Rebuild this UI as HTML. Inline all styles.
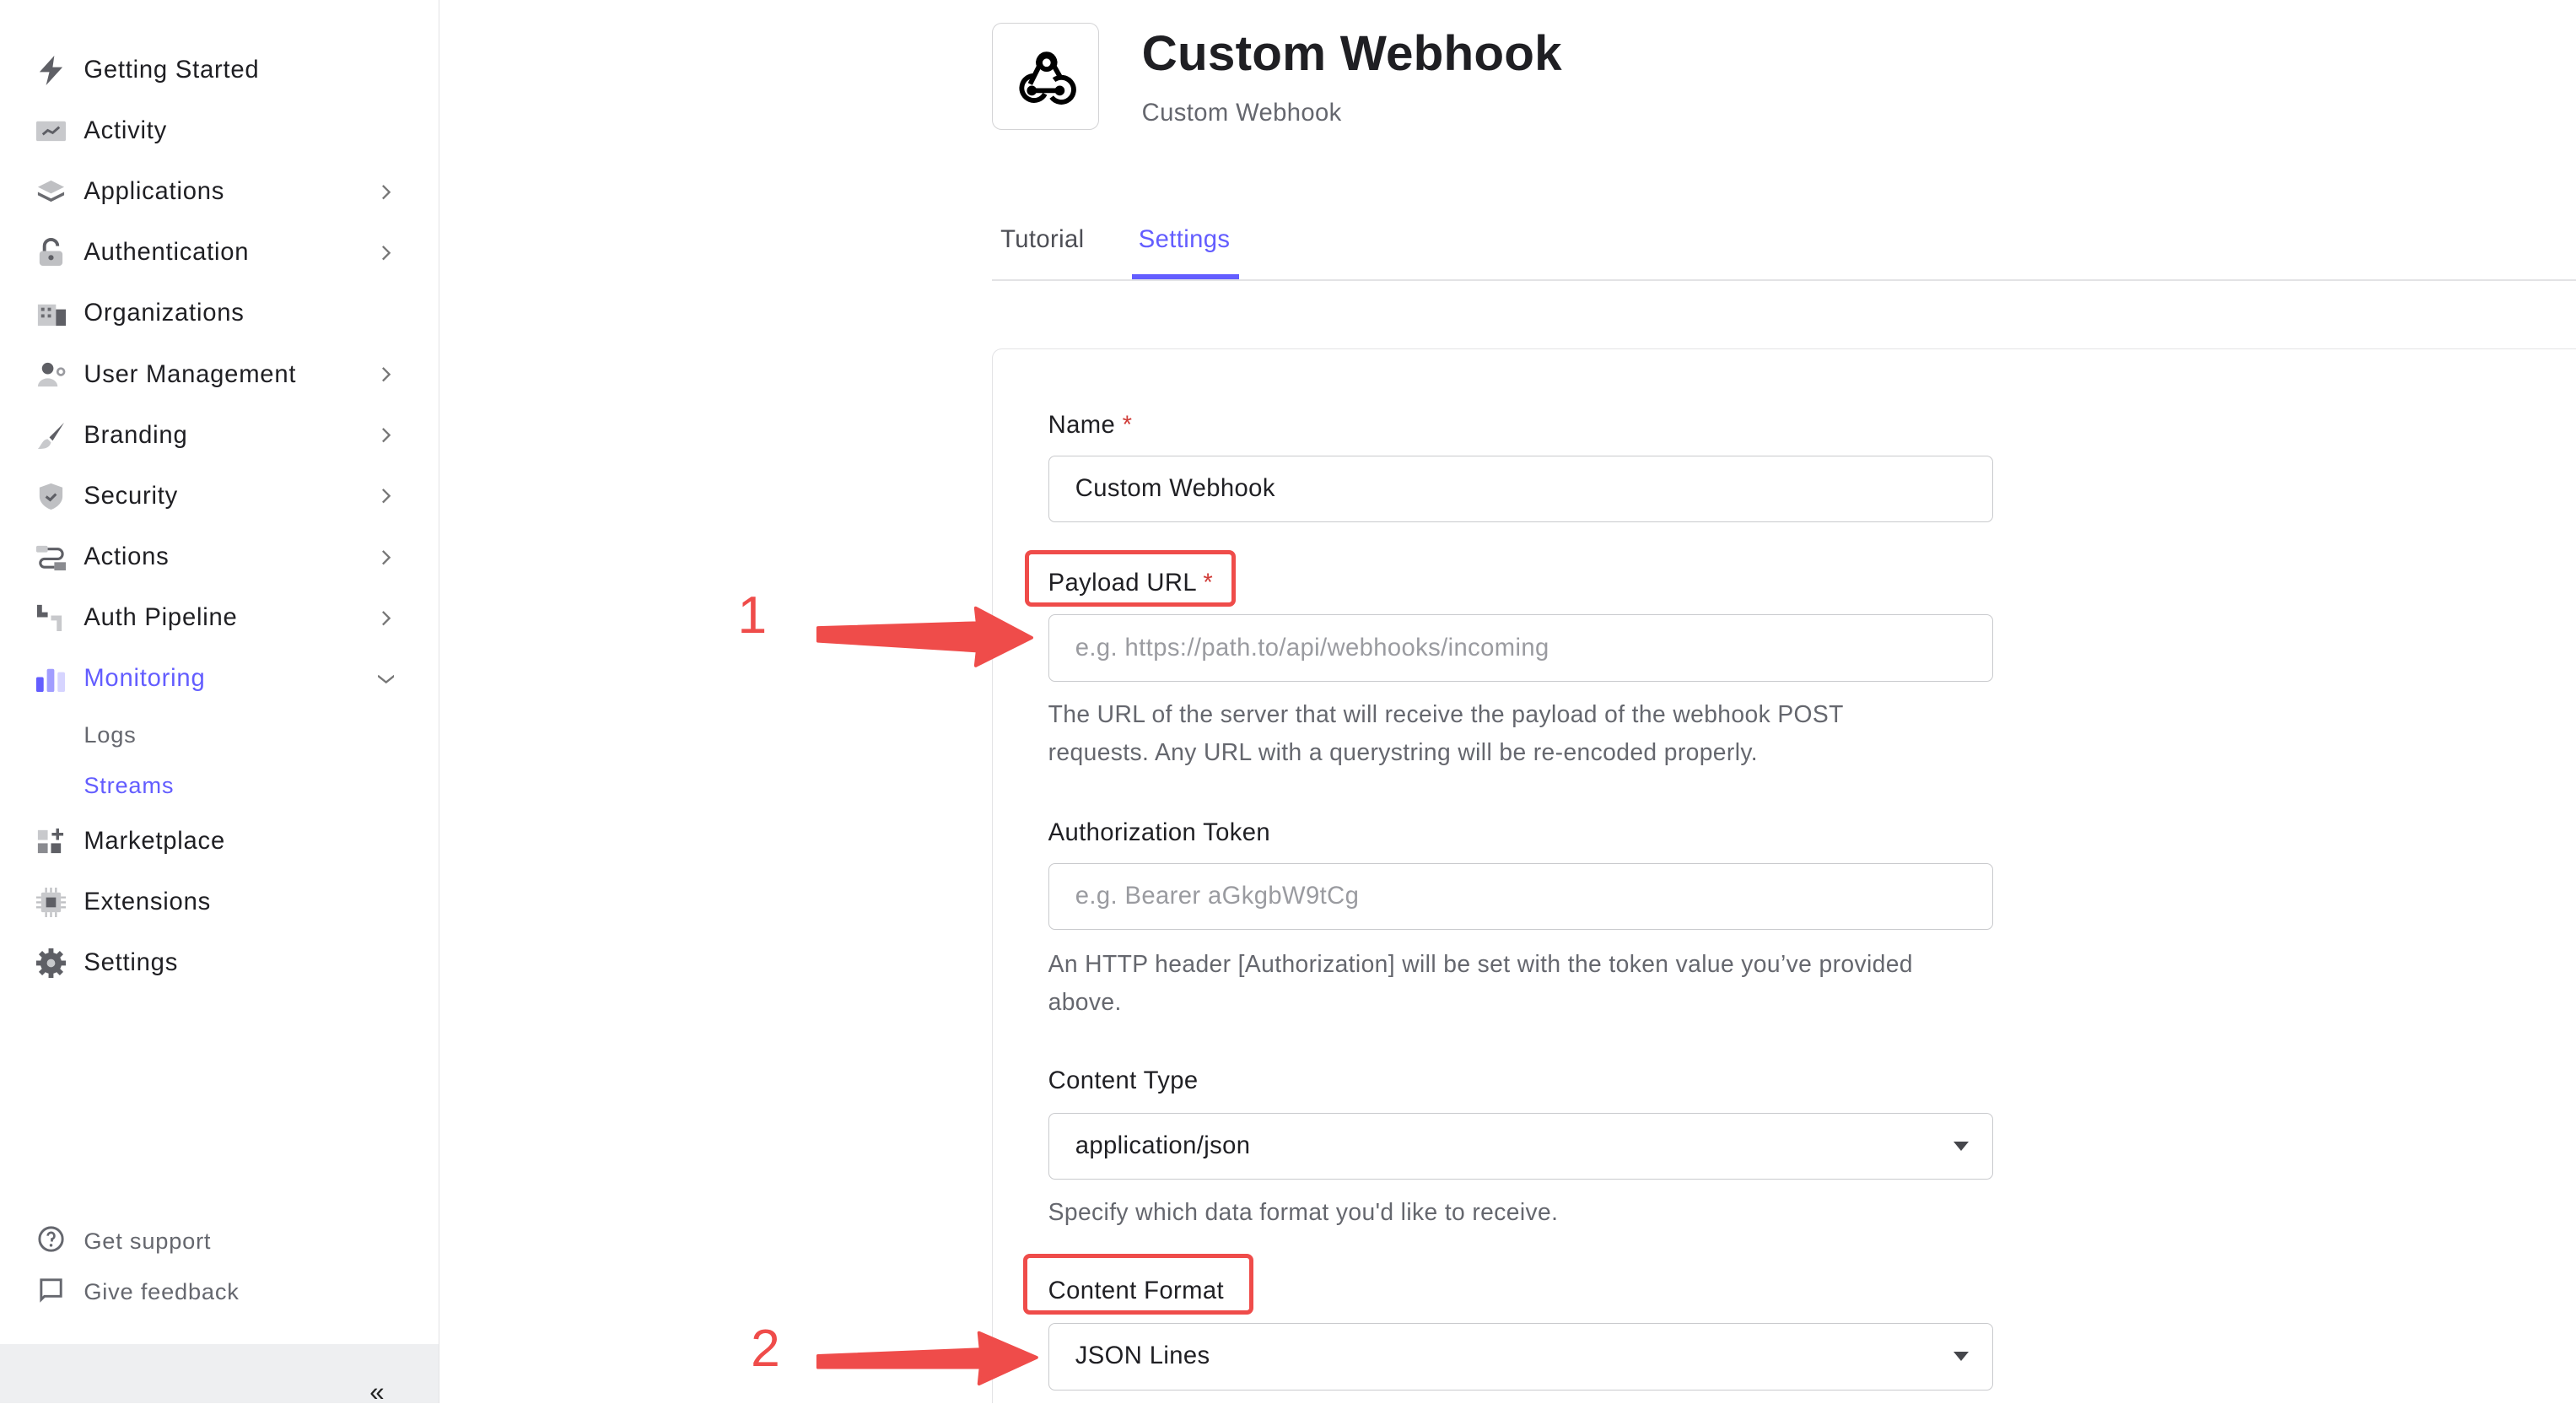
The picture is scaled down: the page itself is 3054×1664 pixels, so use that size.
<!DOCTYPE html>
<html><head><meta charset="utf-8"><style>
html,body{margin:0;padding:0;background:#fff;overflow:hidden}
body{width:3054px;height:1664px}
#r{zoom:1.9477;width:1568px;height:854px;position:relative;font-family:"Liberation Sans",sans-serif;color:#1f1f23;overflow:hidden}
.a{position:absolute;white-space:nowrap}
#sb{position:absolute;left:0;top:0;width:267px;height:854px;border-right:1px solid #e3e3e5;background:#fff}
.nv{position:absolute;left:51px;font-size:15px;color:#1f1f23;line-height:18px;letter-spacing:.4px}
.ic{position:absolute;left:21px;width:20px;height:20px}
.ch{position:absolute;left:230px;width:10px;height:10px}
.lbl{position:absolute;left:638px;font-size:15px;line-height:18px;color:#1f1f23;letter-spacing:.2px}
.lbl b{color:#d03c38;font-weight:normal}
.in{position:absolute;left:638px;width:575px;height:39px;border:1px solid #c9cacd;border-radius:4px;box-sizing:border-box;background:#fff}
.in span{position:absolute;left:16px;top:11px;font-size:15px;line-height:18px;letter-spacing:.2px}
.ph{color:#9a9ba0}
.hp{position:absolute;left:638px;font-size:14.5px;line-height:23px;color:#65676e;letter-spacing:.2px}
.rb{position:absolute;border:3px solid #ef4c4a;border-radius:4px;box-sizing:border-box}
.car{position:absolute;right:14px;top:17px;width:0;height:0;border-left:5px solid transparent;border-right:5px solid transparent;border-top:6px solid #45464b}
</style></head><body><div id="r">
<div id="sb">
<svg class="ic" style="top:33px" viewBox="0 0 20 20"><path d="M12 1 L3 11 H9 L7 19 L17 8 H11 Z" fill="#5e5f65"/></svg>
<div class="nv" style="top:34px">Getting Started</div>
<svg class="ic" style="top:70px" viewBox="0 0 20 20"><rect x="1" y="4" width="18" height="12" rx="1" fill="#c8c9cc"/><path d="M5 12 L8 9.5 L11 11 L15 7.5" stroke="#5e5f65" stroke-width="1.5" fill="none"/></svg>
<div class="nv" style="top:71px">Activity</div>
<svg class="ic" style="top:107px" viewBox="0 0 20 20"><path d="M10 3 L18 7 L10 11 L2 7Z" fill="#bfc0c3"/><path d="M2 10 L10 14 L18 10 L18 12 L10 16 L2 12Z" fill="#6a6b70"/></svg>
<div class="nv" style="top:108px">Applications</div>
<svg class="ic" style="top:144px" viewBox="0 0 20 20"><path d="M6 9 V6 a4 4 0 0 1 8 0" stroke="#5e5f65" stroke-width="2" fill="none"/><rect x="3" y="9" width="14" height="9" rx="2" fill="#bfc0c3"/><circle cx="10" cy="13" r="1.6" fill="#5e5f65"/></svg>
<div class="nv" style="top:145px">Authentication</div>
<svg class="ic" style="top:181px" viewBox="0 0 20 20"><rect x="2" y="4" width="11" height="13" fill="#c8c9cc"/><rect x="13" y="7" width="6" height="10" fill="#5e5f65"/><g fill="#6a6b70"><rect x="4" y="6" width="2" height="2"/><rect x="8" y="6" width="2" height="2"/><rect x="4" y="10" width="2" height="2"/><rect x="8" y="10" width="2" height="2"/></g></svg>
<div class="nv" style="top:182px">Organizations</div>
<svg class="ic" style="top:218px" viewBox="0 0 20 20"><circle cx="8" cy="6" r="3.5" fill="#5e5f65"/><path d="M2 17 a6 5 0 0 1 12 0Z" fill="#c8c9cc"/><circle cx="16" cy="8" r="2" fill="none" stroke="#9a9ba0" stroke-width="1.4"/></svg>
<div class="nv" style="top:219px">User Management</div>
<svg class="ic" style="top:255px" viewBox="0 0 20 20"><path d="M18 2 L9 11 L11 13 Z" fill="#5e5f65"/><path d="M8 12 L10 14 C9 18 5 18 2 18 C4 16 5 12 8 12Z" fill="#c8c9cc"/></svg>
<div class="nv" style="top:256px">Branding</div>
<svg class="ic" style="top:292px" viewBox="0 0 20 20"><path d="M10 2 L17 4.5 V10 C17 14 13 17 10 18 C7 17 3 14 3 10 V4.5Z" fill="#bfc0c3"/><path d="M7 10 L9.5 12 L13 8.5" stroke="#5e5f65" stroke-width="1.6" fill="none"/></svg>
<div class="nv" style="top:293px">Security</div>
<svg class="ic" style="top:329px" viewBox="0 0 20 20"><rect x="1" y="3" width="7" height="4" rx="1" fill="#c8c9cc"/><path d="M8 5 H14 a3 3 0 0 1 0 6 H6 a2.5 2.5 0 0 0 0 5 H12" stroke="#5e5f65" stroke-width="1.6" fill="none"/><rect x="12" y="13" width="7" height="5" fill="#8a8b90"/></svg>
<div class="nv" style="top:330px">Actions</div>
<svg class="ic" style="top:366px" viewBox="0 0 20 20"><path d="M3 2 V8 H8" stroke="#5e5f65" stroke-width="3" fill="none"/><path d="M10 10 H15 V18" stroke="#c8c9cc" stroke-width="3" fill="none"/></svg>
<div class="nv" style="top:367px">Auth Pipeline</div>
<svg class="ic" style="top:403px" viewBox="0 0 20 20"><rect x="1" y="9" width="4.5" height="9" rx="1" fill="#635dff"/><rect x="7.5" y="4" width="4.5" height="14" rx="1" fill="#a19dff"/><rect x="14" y="6" width="4.5" height="12" rx="1" fill="#d6d4ff"/></svg>
<div class="nv" style="top:404px;color:#635dff">Monitoring</div>
<div class="nv" style="top:438px;font-size:14px;color:#65676e">Logs</div>
<div class="nv" style="top:469px;font-size:14px;color:#635dff">Streams</div>
<svg class="ic" style="top:502px" viewBox="0 0 20 20"><rect x="2" y="3" width="6" height="6" fill="#c8c9cc"/><rect x="2" y="11" width="6" height="6" fill="#8a8b90"/><rect x="10" y="11" width="6" height="6" fill="#5e5f65"/><path d="M14 2 V9 M10.5 5.5 H17.5" stroke="#5e5f65" stroke-width="1.8"/></svg>
<div class="nv" style="top:503px">Marketplace</div>
<svg class="ic" style="top:539px" viewBox="0 0 20 20"><rect x="4" y="4" width="12" height="12" rx="1" fill="#c8c9cc"/><rect x="7" y="7" width="6" height="6" fill="#5e5f65"/><path d="M7 1v3M10 1v3M13 1v3M7 16v3M10 16v3M13 16v3M1 7h3M1 10h3M1 13h3M16 7h3M16 10h3M16 13h3" stroke="#bfc0c3" stroke-width="1.2"/></svg>
<div class="nv" style="top:540px">Extensions</div>
<svg class="ic" style="top:576px" viewBox="0 0 20 20"><circle cx="10" cy="10" r="6.5" fill="#5e5f65"/><path d="M10 1v4M10 15v4M1 10h4M15 10h4M3.6 3.6l2.8 2.8M13.6 13.6l2.8 2.8M3.6 16.4l2.8-2.8M13.6 6.4l2.8-2.8" stroke="#5e5f65" stroke-width="3"/><circle cx="10" cy="10" r="2.5" fill="#c8c9cc"/></svg>
<div class="nv" style="top:577px">Settings</div>
<svg class="ch" style="top:112px" viewBox="0 0 10 10"><path d="M3 1 L7 5 L3 9" stroke="#777" stroke-width="1.2" fill="none"/></svg>
<svg class="ch" style="top:149px" viewBox="0 0 10 10"><path d="M3 1 L7 5 L3 9" stroke="#777" stroke-width="1.2" fill="none"/></svg>
<svg class="ch" style="top:223px" viewBox="0 0 10 10"><path d="M3 1 L7 5 L3 9" stroke="#777" stroke-width="1.2" fill="none"/></svg>
<svg class="ch" style="top:260px" viewBox="0 0 10 10"><path d="M3 1 L7 5 L3 9" stroke="#777" stroke-width="1.2" fill="none"/></svg>
<svg class="ch" style="top:297px" viewBox="0 0 10 10"><path d="M3 1 L7 5 L3 9" stroke="#777" stroke-width="1.2" fill="none"/></svg>
<svg class="ch" style="top:334px" viewBox="0 0 10 10"><path d="M3 1 L7 5 L3 9" stroke="#777" stroke-width="1.2" fill="none"/></svg>
<svg class="ch" style="top:371px" viewBox="0 0 10 10"><path d="M3 1 L7 5 L3 9" stroke="#777" stroke-width="1.2" fill="none"/></svg>
<svg class="ch" style="top:408px" viewBox="0 0 10 10"><path d="M0 3 L5 7 L10 3" stroke="#777" stroke-width="1.2" fill="none"/></svg>
<svg class="ic" style="top:745px;left:22px;width:18px;height:18px" viewBox="0 0 18 18"><circle cx="9" cy="9" r="7" stroke="#65676e" stroke-width="1.5" fill="none"/><path d="M7 7 a2 2 0 1 1 2.5 2 V10.5" stroke="#65676e" stroke-width="1.4" fill="none"/><circle cx="9" cy="12.8" r=".9" fill="#65676e"/></svg>
<div class="nv" style="top:746px;font-size:14px;color:#65676e">Get support</div>
<svg class="ic" style="top:776px;left:22px;width:18px;height:18px" viewBox="0 0 18 18"><path d="M3 3 H15 V13 H5 L3 15 Z" stroke="#65676e" stroke-width="1.5" fill="none"/></svg>
<div class="nv" style="top:777px;font-size:14px;color:#65676e">Give feedback</div>
<div class="a" style="left:0;top:818px;width:267px;height:36px;background:#eeeff1"></div>
<div class="a" style="left:225px;top:838px;font-size:16px;color:#222">«</div>
</div>

<div class="a" style="left:604px;top:14px;width:65px;height:65px;border:1px solid #d3d3d5;border-radius:6px;box-sizing:border-box"></div>
<svg class="a" style="left:614px;top:24px;width:45px;height:45px" viewBox="0 0 45 45"><g fill="none" stroke="#000" stroke-width="3"><circle cx="23" cy="14" r="4"/><path d="M18.5 16 L13 27"/><path d="M27.5 16 L32 24"/><path d="M14 31 H31"/><path d="M16 22 A7.5 7.5 0 1 0 22 33"/><path d="M27.5 24.5 A7.5 7.5 0 1 1 26 35"/><path d="M18.5 16 A5 5 0 1 1 27.5 16"/></g><circle cx="14" cy="31" r="3" fill="#000"/><circle cx="31" cy="31" r="3" fill="#000"/></svg>
<div class="a" style="left:695px;top:14px;font-size:30px;font-weight:bold;line-height:38px;color:#1f1f23;letter-spacing:.1px">Custom Webhook</div>
<div class="a" style="left:695px;top:60px;font-size:15px;line-height:18px;color:#65676e;letter-spacing:.2px">Custom Webhook</div>

<div class="a" style="left:609px;top:137px;font-size:15px;line-height:18px;color:#4d4e55;letter-spacing:.2px">Tutorial</div>
<div class="a" style="left:693px;top:137px;font-size:15px;line-height:18px;color:#635dff;letter-spacing:.2px">Settings</div>
<div class="a" style="left:604px;top:170px;width:964px;height:1px;background:#e3e3e5"></div>
<div class="a" style="left:689px;top:167px;width:65px;height:3px;background:#635dff"></div>

<div class="a" style="left:604px;top:212px;width:980px;height:660px;border:1px solid #e3e3e5;border-radius:6px;box-sizing:border-box"></div>

<div class="lbl" style="top:250px">Name <b>*</b></div>
<div class="in" style="top:277px;height:41px"><span>Custom Webhook</span></div>

<div class="rb" style="left:624px;top:335px;width:128px;height:34px"></div>
<div class="lbl" style="top:346px">Payload URL <b>*</b></div>
<div class="in" style="top:374px;height:41px"><span class="ph">e.g. https://path.to/api/webhooks/incoming</span></div>
<div class="hp" style="top:423px">The URL of the server that will receive the payload of the webhook POST<br>requests. Any URL with a querystring will be re-encoded properly.</div>

<div class="lbl" style="top:498px">Authorization Token</div>
<div class="in" style="top:525px;height:41px"><span class="ph">e.g. Bearer aGkgbW9tCg</span></div>
<div class="hp" style="top:575px">An HTTP header [Authorization] will be set with the token value you’ve provided<br>above.</div>

<div class="lbl" style="top:649px">Content Type</div>
<div class="in" style="top:677px;height:41px"><span>application/json</span><div class="car"></div></div>
<div class="hp" style="top:726px">Specify which data format you'd like to receive.</div>

<div class="rb" style="left:623px;top:763px;width:140px;height:37px"></div>
<div class="lbl" style="top:777px">Content Format</div>
<div class="in" style="top:805px;height:41px"><span>JSON Lines</span><div class="car"></div></div>

<div class="a" style="left:449px;top:357px;font-size:32px;color:#ef4c4a;line-height:36px">1</div>
<svg class="a" style="left:495px;top:365px;width:140px;height:45px" viewBox="0 0 140 45"><path d="M3 17 L100 14 L99 5 L133 23 L99 40 L100 31 L3 25Z" fill="#ef4c4a" stroke="#ef4c4a" stroke-width="2" stroke-linejoin="round"/></svg>
<div class="a" style="left:457px;top:803px;font-size:32px;color:#ef4c4a;line-height:36px">2</div>
<svg class="a" style="left:495px;top:805px;width:140px;height:45px" viewBox="0 0 140 45"><path d="M3 20 L102 16 L101 6 L136 21 L101 37 L102 27 L3 27Z" fill="#ef4c4a" stroke="#ef4c4a" stroke-width="2" stroke-linejoin="round"/></svg>
</div></body></html>
